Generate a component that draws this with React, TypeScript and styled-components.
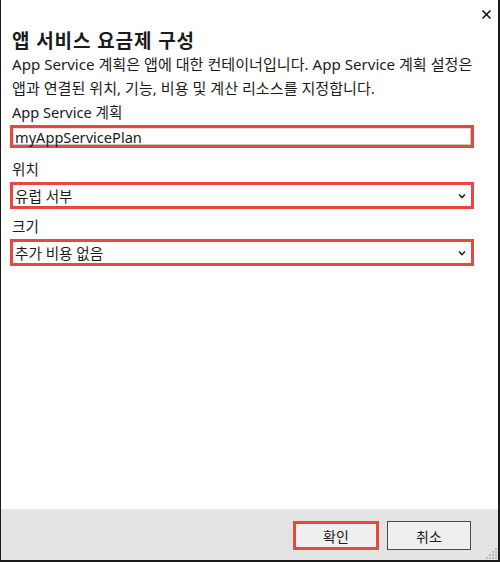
import React from "react";
import styled, { createGlobalStyle } from "styled-components";

const Global = createGlobalStyle`
  html, body { margin: 0; padding: 0; background: #fff; }
  body { font-family: "Segoe UI", "Noto Sans", "Noto Sans CJK KR", sans-serif; }
  * { box-sizing: border-box; }
`;

const FONT = `"Noto Sans", "Noto Sans CJK KR", sans-serif`;
const RED = "#e8473f";

const Window = styled.div`
  width: 500px;
  height: 562px;
  display: flex;
  flex-direction: column;
  border-left: 1px solid #1a1a1a;
  border-right: 2px solid #1a1a1a;
  border-bottom: 2px solid #1a1a1a;
  background: #fff;
  font-family: ${FONT};
  color: #1b1b1b;
  position: relative;
`;

const Main = styled.div`
  flex: 1;
  display: flex;
  flex-direction: column;
  padding: 24px 24px 0 9px;
`;

const CloseButton = styled.div`
  position: absolute;
  top: 10px;
  right: 6px;
  width: 11px;
  height: 9px;
  line-height: 0;
  cursor: pointer;
`;

const Title = styled.h1`
  margin: 6px 0 0 2px;
  font-size: 19px;
  font-weight: 700;
  line-height: 22px;
  letter-spacing: 0.9px;
`;

const Description = styled.p`
  margin: 0 0 0 2px;
  font-size: 15.1px;
  line-height: 24px;
`;

const Field = styled.div`
  display: flex;
  flex-direction: column;
`;

const Label = styled.label<{ $top: number }>`
  margin: ${(p) => p.$top}px 0 3px 2px;
  font-size: 14.6px;
  line-height: 20px;
`;

const Highlight = styled.div<{ $h: number }>`
  height: ${(p) => p.$h}px;
  border: 3px solid ${RED};
  display: flex;
`;

const TextBox = styled.div`
  flex: 1;
  display: flex;
  align-items: center;
  padding-left: 2px;
  font-size: 14.6px;
  background: #fff;
  box-shadow: inset -1px -1px 0 #c6c6c6, inset 1px 1px 0 #e0e0e0;
`;

const SelectBox = styled.div`
  flex: 1;
  display: flex;
  align-items: center;
  justify-content: space-between;
  padding: 0 5px 0 2px;
  font-size: 14.6px;
  background: #fff;
`;

const Footer = styled.div`
  height: 51px;
  background: #e3e3e3;
  border-top: 1px solid #e8e8e8;
  display: flex;
  justify-content: flex-end;
  align-items: flex-start;
  gap: 8px;
  padding: 11px 27px 0 0;
`;

const Button = styled.button<{ $primary?: boolean }>`
  height: 29px;
  width: ${(p) => (p.$primary ? 86 : 84)}px;
  background: #efefef;
  border: ${(p) => (p.$primary ? `3px solid ${RED}` : "1px solid #4a4a4a")};
  font-family: ${FONT};
  font-size: 14px;
  color: #1b1b1b;
  padding: 0;
  cursor: pointer;
`;

const Grip = styled.svg`
  position: absolute;
  right: 0;
  bottom: 0;
`;

const Chevron = () => (
  <svg width="8" height="6" viewBox="0 0 8 6">
    <polyline points="1,1.5 4,4.5 7,1.5" fill="none" stroke="#222" strokeWidth="1.6" />
  </svg>
);

const gripDots: [number, number][] = [
  [9, 0],
  [6, 3], [9, 3],
  [3, 6], [6, 6], [9, 6],
  [0, 9], [3, 9], [6, 9], [9, 9],
];

export default function App() {
  return (
    <>
      <Global />
      <Window>
        <CloseButton aria-label="닫기">
          <svg width="11" height="9" viewBox="0 0 11 9">
            <line x1="1.5" y1="0.5" x2="9.5" y2="8.5" stroke="#111" strokeWidth="1.5" />
            <line x1="9.5" y1="0.5" x2="1.5" y2="8.5" stroke="#111" strokeWidth="1.5" />
          </svg>
        </CloseButton>
        <Main>
          <Title>앱 서비스 요금제 구성</Title>
          <Description>
            App Service 계획은 앱에 대한 컨테이너입니다. App Service 계획 설정은
            <br />
            앱과 연결된 위치, 기능, 비용 및 계산 리소스를 지정합니다.
          </Description>
          <Field>
            <Label $top={2}>App Service 계획</Label>
            <Highlight $h={23}>
              <TextBox>myAppServicePlan</TextBox>
            </Highlight>
          </Field>
          <Field>
            <Label $top={11}>위치</Label>
            <Highlight $h={27}>
              <SelectBox>
                <span>유럽 서부</span>
                <Chevron />
              </SelectBox>
            </Highlight>
          </Field>
          <Field>
            <Label $top={7}>크기</Label>
            <Highlight $h={27}>
              <SelectBox>
                <span>추가 비용 없음</span>
                <Chevron />
              </SelectBox>
            </Highlight>
          </Field>
        </Main>
        <Footer>
          <Button $primary>확인</Button>
          <Button>취소</Button>
        </Footer>
        <Grip width="12" height="12" viewBox="0 0 12 12">
          {gripDots.map(([x, y], i) => (
            <rect key={i} x={x} y={y} width="2" height="2" fill="#b8bcc8" />
          ))}
        </Grip>
      </Window>
    </>
  );
}
